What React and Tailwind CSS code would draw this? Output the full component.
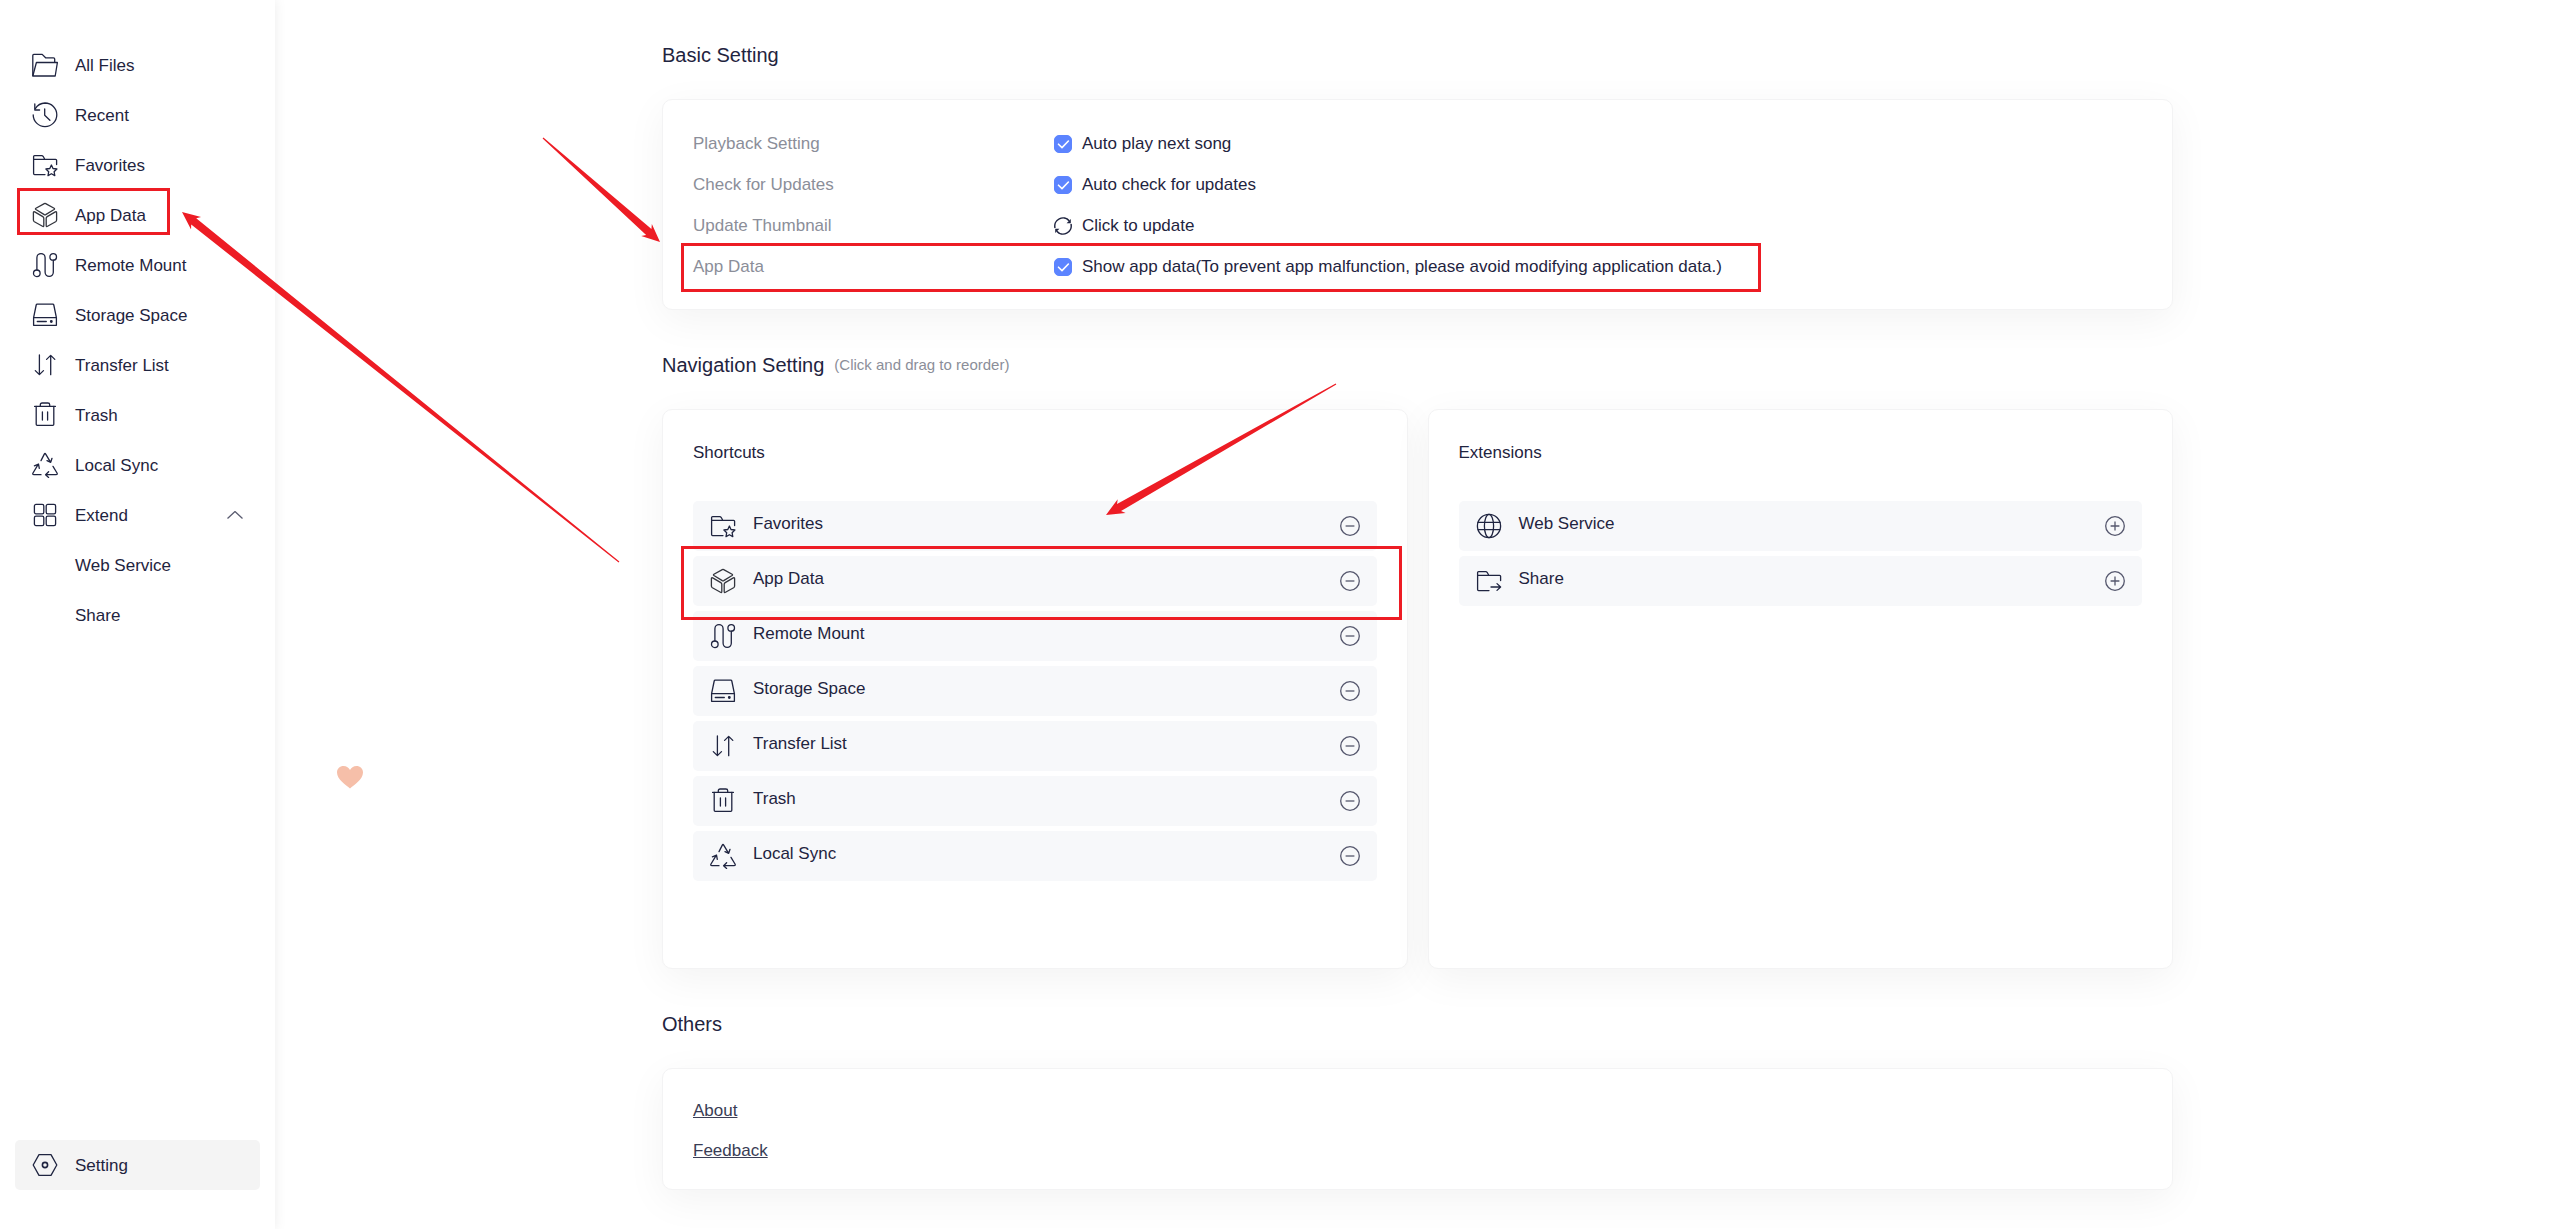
import React, { useState } from "react";

const folder = "M13 22.6H2.6q-1 0-1-1V4.6q0-1 1-1h7.2q.8 0 1.3.7l1.7 3h10.8q1 0 1 1v4.3M1.6 7.3h11.2";

const icons = {
    files: (
        <>
            <path d="M.8 23.5V3.4q0-1 1-1h8.4l3.4 3.4h7.9q1.2 0 1.2 1.2v3.4" />
            <path d="M.8 24 4.4 10.5h21L23.2 24z" />
        </>
    ),
    recent: (
        <>
            <path d="M1.2 12.8A11.8 11.8 0 1 0 13 1a11.8 11.8 0 0 0-9.7 5.6" />
            <path d="M2.8 2v6h4.8M12.7 7v6.2l5.2 5" />
        </>
    ),
    favorites: (
        <>
            <path d={folder} />
            <path d="m19.4 13 1.6 3.5 3.9.5-2.8 2.7.7 3.9-3.4-1.9-3.4 1.9.7-3.9-2.8-2.7 3.9-.5z" />
        </>
    ),
    appData: (
        <g stroke="#33353d">
            <path d="M12.3 1.6q.7-.4 1.4 0l8.4 4.7q.9.6 0 1.2L13.7 12.6q-.7.4-1.4 0L3.9 7.5q-.9-.6 0-1.2z" />
            <path d="M1.4 10.8q0-1.6 1.3-.9l8.1 4.7q1 .6 1 1.7v7.2q0 1.5-1.3.8l-8.1-4.5q-1-.6-1-1.7z" />
            <path d="M24.6 10.8q0-1.6-1.3-.9l-8.1 4.7q-1 .6-1 1.7v7.2q0 1.5 1.3.8l8.1-4.5q1-.6 1-1.7z" />
        </g>
    ),
    mount: (
        <>
            <circle cx="4.8" cy="21.3" r="3.3" />
            <circle cx="21.2" cy="4.9" r="3.3" />
            <path d="M4.9 18V5.7a4 4 0 0 1 8.2 0v14.6a4 4 0 0 0 8.2 0V8.2" />
        </>
    ),
    storage: (
        <>
            <path d="M1.6 15.7 4.2 3q.2-.8 1-.8h15.6q.8 0 1 .8l2.6 12.7v7.6H1.6v-7.6h22.8" />
            <path d="M5.3 19.5h9" />
            <circle cx="19.3" cy="19.5" r=".8" fill="currentColor" />
        </>
    ),
    transfer: <path d="M7.4 3v19.4M3.3 18.6l4.1 4 4.1-4M18.7 22.7V3.4M14.6 7.4l4.1-4 4.1 4" />,
    trash: (
        <>
            <path d="M2.6 4.4h20.8M8.3 4.4V2.8q0-1.8 1.8-1.8h5.8q1.8 0 1.8 1.8v1.6" />
            <path d="M4.2 4.4v17.9q0 1 1 1h15.6q1 0 1-1V4.4M10.4 10v8M15.6 10v8" />
        </>
    ),
    sync: (
        <>
            <path d="m9 8.6 3.3-6.5q.7-1.2 1.4 0l4.8 8M15 8.6l3.7 1.7 1.3-4" />
            <path d="M9 22.7H2Q.2 22.7 1 21l5.2-8.7M2.4 13.8l4.1-1.7.8 4.2" />
            <path d="m21 14.4 4 6.6q.8 1.7-1 1.7H13.8M16.6 19.8l-3 2.9 3 2.7" />
        </>
    ),
    extend: (
        <>
            <rect x="2.4" y="2.4" width="9.4" height="9.4" rx="1.6" />
            <rect x="14.2" y="2.4" width="9.4" height="9.4" rx="1.6" />
            <rect x="2.4" y="14.2" width="9.4" height="9.4" rx="1.6" />
            <rect x="14.2" y="14.2" width="9.4" height="9.4" rx="1.6" />
        </>
    ),
    setting: (
        <>
            <path d="M7 2.6h12L24.8 13 19 23.4H7L1.2 13z" />
            <circle cx="13" cy="13" r="2.6" strokeWidth="1.6" />
        </>
    ),
    web: (
        <>
            <circle cx="13" cy="13" r="11.6" />
            <ellipse cx="13" cy="13" rx="4.6" ry="11.6" />
            <path d="M2 9.4h22M2 16.6h22" />
        </>
    ),
    share: (
        <>
            <path d={folder} />
            <path d="M15 19h9.4M21 15.6l3.6 3.4-3.6 3.4" />
        </>
    ),
};

function Icon({ name }) {
    return (
        <svg
            viewBox="0 0 26 26"
            className="size-[26px] shrink-0"
            fill="none"
            stroke="currentColor"
            strokeWidth="1.3"
            strokeLinecap="round"
            strokeLinejoin="round"
            aria-hidden="true"
        >
            {icons[name]}
        </svg>
    );
}

const navItems = [
    { icon: "files", label: "All Files" },
    { icon: "recent", label: "Recent" },
    { icon: "favorites", label: "Favorites" },
    { icon: "appData", label: "App Data", marked: true },
    { icon: "mount", label: "Remote Mount" },
    { icon: "storage", label: "Storage Space" },
    { icon: "transfer", label: "Transfer List" },
    { icon: "trash", label: "Trash" },
    { icon: "sync", label: "Local Sync" },
];

const shortcuts = navItems.slice(2);

const extensions = [
    { icon: "web", label: "Web Service" },
    { icon: "share", label: "Share" },
];

const navRow = "relative flex h-[50px] w-full items-center gap-[17px] rounded-[5px] px-[17px]";

// Red frame drawn over a marked row
function Marker({ className }) {
    return (
        <span
            className={`pointer-events-none absolute z-10 border-3 border-[#ed1c24] ${className}`}
        />
    );
}

function Sidebar() {
    const [open, setOpen] = useState(true);

    return (
        <nav className="flex w-[275px] shrink-0 flex-col bg-white px-[15px] py-10 shadow-[0_0_12px_rgba(0,0,0,0.08)]">
            {navItems.map((item) => (
                <a key={item.label} href="#" className={navRow}>
                    <Icon name={item.icon} />
                    <span className="pt-0.5">{item.label}</span>
                    {item.marked && (
                        <Marker className="-top-[2px] left-[2px] h-[47px] w-[153px]" />
                    )}
                </a>
            ))}
            <button
                type="button"
                aria-expanded={open}
                onClick={() => setOpen(!open)}
                className={navRow}
            >
                <Icon name="extend" />
                <span className="pt-0.5">Extend</span>
                <svg
                    viewBox="0 0 16 8"
                    className="ml-auto h-2 w-4"
                    fill="none"
                    stroke="#5a5c70"
                    strokeWidth="1.3"
                >
                    <path d="m.5 7.5 7.5-7 7.5 7" />
                </svg>
            </button>
            {open &&
                extensions.map((item) => (
                    <a
                        key={item.label}
                        href="#"
                        className="flex h-[50px] items-center pt-0.5 pl-[60px]"
                    >
                        {item.label}
                    </a>
                ))}
            <div className="mt-auto">
                <a href="#" className={`${navRow} bg-[#f4f4f4]`}>
                    <Icon name="setting" />
                    <span className="pt-0.5">Setting</span>
                </a>
            </div>
        </nav>
    );
}

function SectionTitle({ children, note }) {
    return (
        <div className="flex items-center gap-[10px] pt-[43px] pb-8">
            <h2 className="text-xl leading-6">{children}</h2>
            {note && <span className="text-[15px] leading-6 text-[#8b8e99]">{note}</span>}
        </div>
    );
}

function Card({ className, children }) {
    return (
        <section
            className={`rounded-[10px] border border-[#f3f3f4] bg-white px-[30px] shadow-[0_10px_40px_rgba(0,0,0,0.05)] ${className}`}
        >
            {children}
        </section>
    );
}

function SettingRow({ name, marked, children }) {
    return (
        <div className="relative flex h-5 items-center">
            <span className="w-[361px] shrink-0 text-[#8b8e99]">{name}</span>
            {children}
            {marked && (
                <Marker className="-top-[14px] -left-3 h-[49px] w-[1080px]" />
            )}
        </div>
    );
}

function Checkbox({ label }) {
    return (
        <label className="flex items-center gap-[10px]">
            <span className="relative size-[18px]">
                <input
                    type="checkbox"
                    defaultChecked
                    className="peer block size-[18px] appearance-none rounded-[5px] border border-[#c5c8d3] checked:border-[#5c84ff] checked:bg-[#5c84ff]"
                />
                <svg
                    viewBox="0 0 18 18"
                    className="pointer-events-none absolute inset-0 hidden peer-checked:block"
                    fill="none"
                    stroke="white"
                    strokeWidth="1.6"
                    strokeLinecap="round"
                    strokeLinejoin="round"
                >
                    <path d="m4.5 9.2 3.5 3.4L14.4 6" />
                </svg>
            </span>
            {label}
        </label>
    );
}

function ShortcutList({ title, items, action }) {
    return (
        <Card className="min-h-[560px] flex-1 pt-[33px] pb-8">
            <h3 className="mb-[38px] leading-5">{title}</h3>
            <ul className="flex flex-col gap-[5px]">
                {items.map((item) => (
                    <li key={item.label} className={`${navRow} bg-[#f7f8fa]`}>
                        <Icon name={item.icon} />
                        <span className="pb-1">{item.label}</span>
                        <button
                            type="button"
                            aria-label={`${action} ${item.label}`}
                            className="ml-auto"
                        >
                            <svg
                                viewBox="0 0 20 20"
                                className="size-5"
                                fill="none"
                                stroke="#55576d"
                                strokeWidth="1.3"
                            >
                                <circle cx="10" cy="10" r="9.3" />
                                <path d={action === "Add" ? "M5.6 10h8.8M10 5.6v8.8" : "M5.6 10h8.8"} />
                            </svg>
                        </button>
                        {item.marked && (
                            <Marker className="-top-[10px] -left-3 h-[74px] w-[721px]" />
                        )}
                    </li>
                ))}
            </ul>
        </Card>
    );
}

// Tapered arrow that points from one spot to another
function Arrow({ from, to }) {
    const dx = from[0] - to[0];
    const dy = from[1] - to[1];
    const length = Math.hypot(dx, dy);
    const angle = (Math.atan2(dy, dx) * 180) / Math.PI;

    return (
        <polygon
            points={`0,0 18,-8 15,-4 ${length},-0.6 ${length},0.6 15,4 18,8`}
            transform={`translate(${to[0]} ${to[1]}) rotate(${angle})`}
        />
    );
}

export default function App() {
    return (
        <div className="relative flex min-h-screen bg-white font-['Liberation_Sans',Arial,sans-serif] text-[17px] text-[#1f2440]">
            <Sidebar />

            <main className="min-w-0 flex-1 px-10 pb-10">
                <div className="mx-auto max-w-[1511px]">
                    <SectionTitle>Basic Setting</SectionTitle>
                    <Card className="flex flex-col gap-[21px] pt-[34px] pb-8">
                        <SettingRow name="Playback Setting">
                            <Checkbox label="Auto play next song" />
                        </SettingRow>
                        <SettingRow name="Check for Updates">
                            <Checkbox label="Auto check for updates" />
                        </SettingRow>
                        <SettingRow name="Update Thumbnail">
                            <button type="button" className="flex items-center gap-[10px]">
                                <svg
                                    viewBox="0 0 18 18"
                                    className="size-[18px]"
                                    fill="none"
                                    stroke="currentColor"
                                    strokeWidth="1.5"
                                >
                                    <path d="M1 11A8.2 8.2 0 0 1 15.2 3.8M17 7A8.2 8.2 0 0 1 2.8 14.2" />
                                    <path d="M16.8 2v4.2h-4.2zM1.2 16v-4.2h4.2z" fill="currentColor" stroke="none" />
                                </svg>
                                Click to update
                            </button>
                        </SettingRow>
                        <SettingRow name="App Data" marked>
                            <Checkbox label="Show app data(To prevent app malfunction, please avoid modifying application data.)" />
                        </SettingRow>
                    </Card>

                    <SectionTitle note="(Click and drag to reorder)">Navigation Setting</SectionTitle>
                    <div className="flex gap-5">
                        <ShortcutList title="Shortcuts" items={shortcuts} action="Remove" />
                        <ShortcutList title="Extensions" items={extensions} action="Add" />
                    </div>

                    <SectionTitle>Others</SectionTitle>
                    <Card className="flex flex-col items-start gap-5 pt-8 pb-7">
                        <a href="#" className="leading-5 text-[#3a3d55] underline">
                            About
                        </a>
                        <a href="#" className="leading-5 text-[#3a3d55] underline">
                            Feedback
                        </a>
                    </Card>
                </div>
            </main>

            {/* Arrows and the click heart float over the page */}
            <svg
                width="1400"
                height="800"
                className="pointer-events-none absolute top-0 left-0 z-20"
                fill="#ed1c24"
                aria-hidden="true"
            >
                <Arrow from={[543, 138]} to={[660, 242]} />
                <Arrow from={[619, 562]} to={[182, 212]} />
                <Arrow from={[1336, 384]} to={[1106, 515]} />
                <path
                    d="M350 788.500C346 785 337 779.500 337 772.500C337 768.500 340 766 343.500 766C346.500 766 349 768 350 770C351 768 353.500 766 356.500 766C360 766 363 768.500 363 772.500C363 779.500 354 785 350 788.500Z"
                    fill="#f6bfa9"
                />
            </svg>
        </div>
    );
}
